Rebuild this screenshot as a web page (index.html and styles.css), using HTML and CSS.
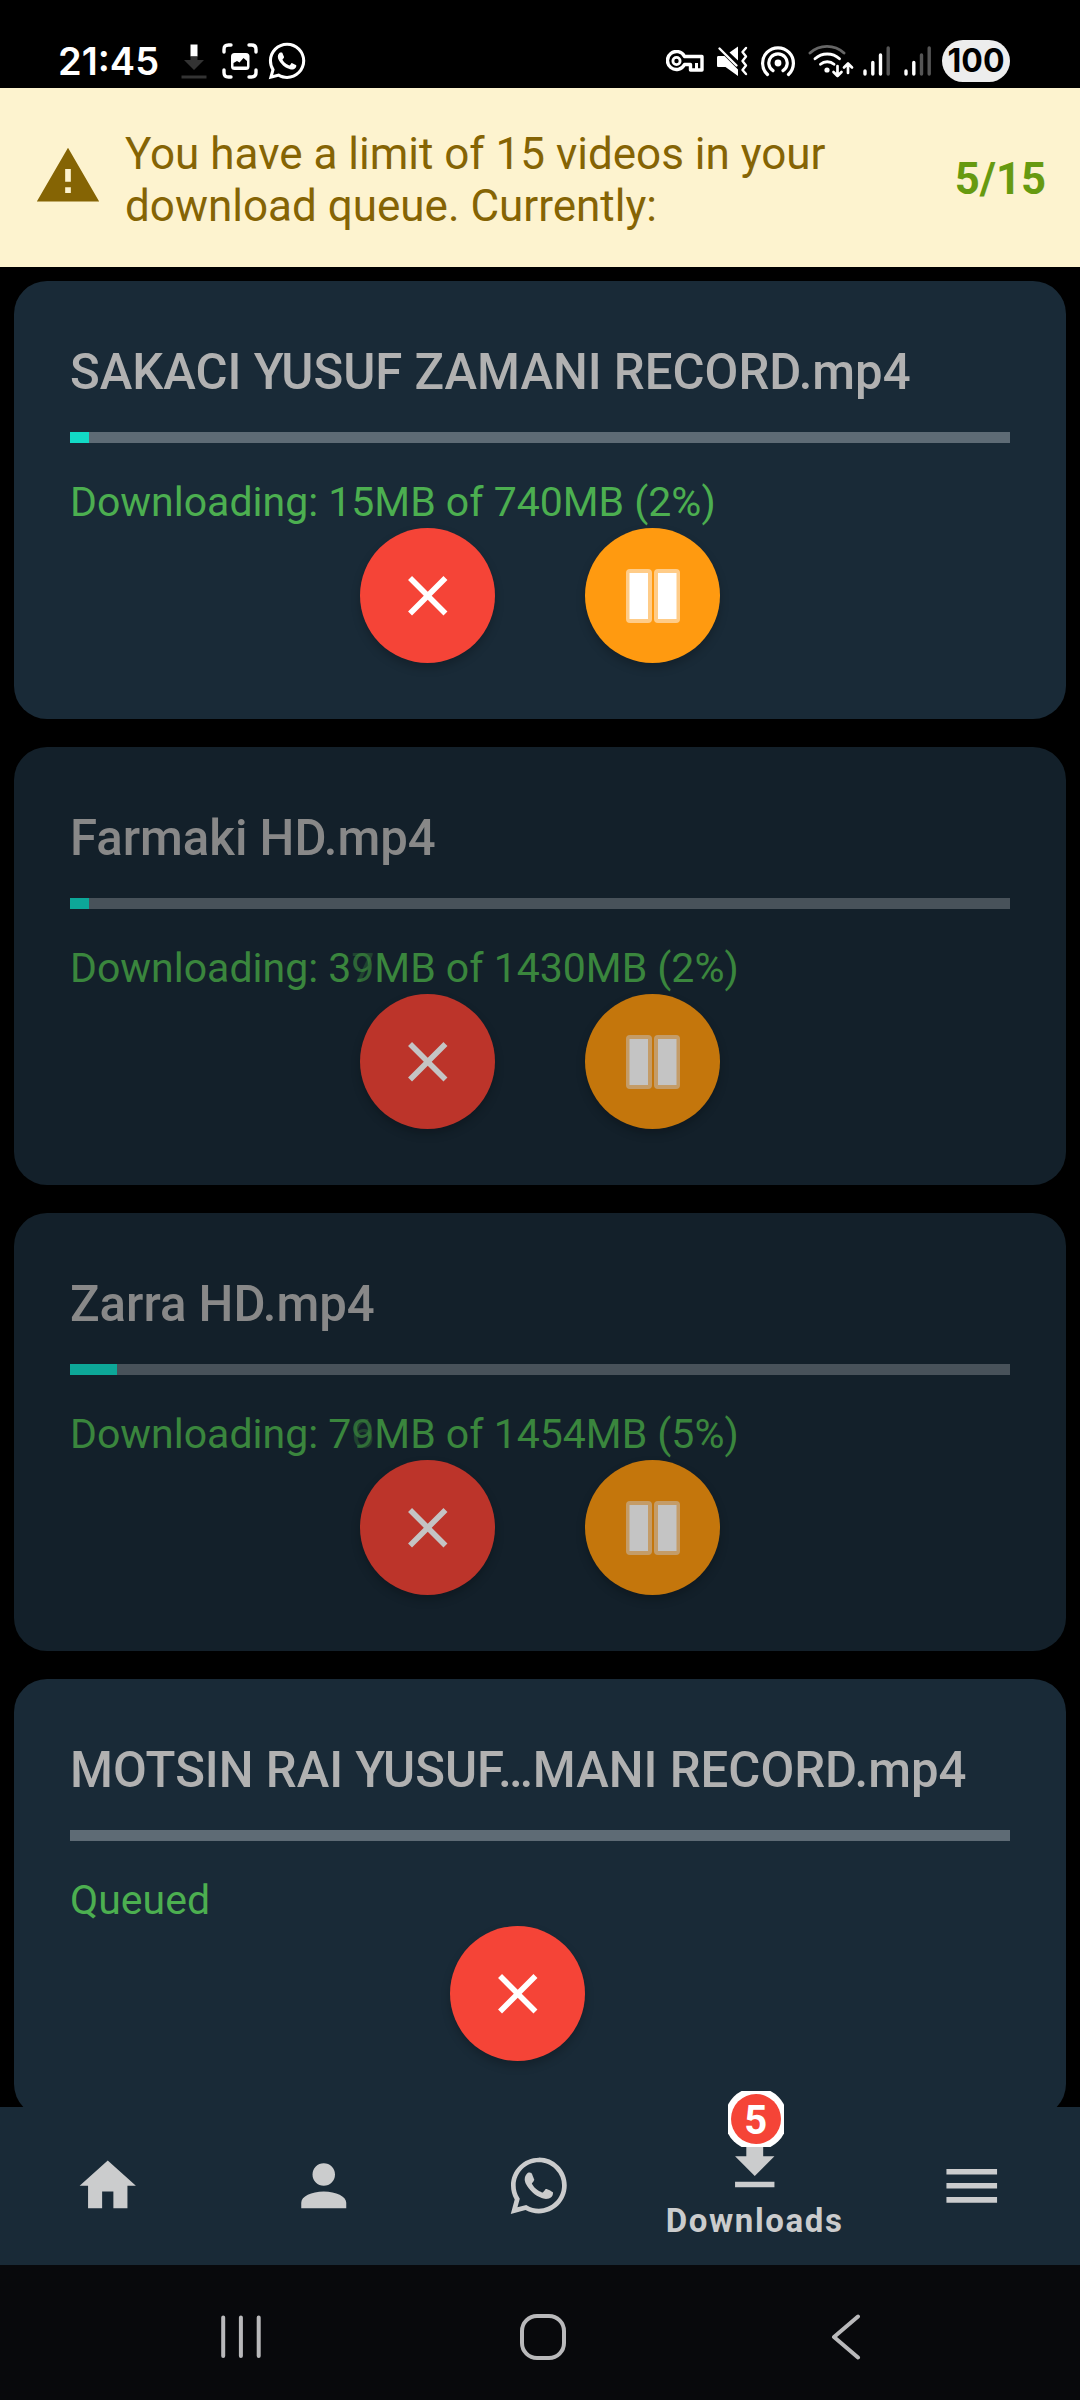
FILE: index.html
```
<!DOCTYPE html>
<html lang="en">
<head>
<meta charset="utf-8">
<title>Downloads</title>
<link rel="stylesheet" href="styles.css">
</head>
<body>
<svg class="defs" width="0" height="0">
  <symbol id="close" viewBox="0 0 24 24"><path d="M19 6.41 17.59 5 12 10.59 6.41 5 5 6.41 10.59 12 5 17.59 6.41 19 12 13.41 17.59 19 19 17.59 13.41 12z"/></symbol>
  <symbol id="pause" viewBox="0 0 54 54">
    <g opacity=".5"><rect width="26" height="54" rx="4"/><rect x="28" width="26" height="54" rx="4"/></g>
    <rect x="3.5" y="4" width="18.5" height="46"/><rect x="32" y="4" width="18.5" height="46"/>
  </symbol>
  <symbol id="whatsapp" viewBox="0 0 24 24"><path d="M12.04 2C6.58 2 2.13 6.45 2.13 11.91c0 1.75.46 3.45 1.32 4.95L2.05 22l5.25-1.38c1.45.79 3.08 1.21 4.74 1.21 5.46 0 9.91-4.45 9.91-9.91 0-2.65-1.03-5.14-2.9-7.01A9.82 9.82 0 0 0 12.04 2m.01 1.67c2.2 0 4.26.86 5.82 2.42a8.23 8.23 0 0 1 2.41 5.83c0 4.54-3.7 8.23-8.24 8.23-1.48 0-2.93-.39-4.19-1.15l-.3-.17-3.12.82.83-3.04-.2-.32a8.19 8.19 0 0 1-1.26-4.38c.01-4.54 3.7-8.24 8.25-8.24M8.53 7.33c-.16 0-.43.06-.66.31-.22.25-.87.86-.87 2.07 0 1.22.89 2.39 1 2.56.14.17 1.76 2.67 4.25 3.73.59.27 1.05.42 1.41.53.59.19 1.13.16 1.56.1.48-.07 1.46-.6 1.67-1.18s.21-1.07.15-1.18c-.07-.1-.23-.16-.48-.27-.25-.14-1.47-.74-1.69-.82-.23-.08-.37-.12-.56.12-.16.25-.64.81-.78.97-.15.17-.29.19-.53.07-.26-.13-1.06-.39-2-1.23-.74-.66-1.23-1.47-1.38-1.72-.12-.24-.01-.39.11-.5.11-.11.27-.29.37-.44.13-.14.17-.25.25-.41.08-.17.04-.31-.02-.43-.06-.11-.56-1.35-.77-1.84-.2-.48-.4-.42-.56-.43-.14 0-.3-.01-.47-.01"/></symbol>
</svg>

<header class="status-bar">
  <div class="status-left">
    <span class="clock">21:45</span>
    <svg class="s-download" width="26" height="36" viewBox="0 0 26 36"><path fill="#fff" d="M9.5 1.500h7v12h-7z"/><path fill="#333" d="M9.5 13.500h7v3.500H23L13 27 3 17h6.500zM.5 32.500h25v3H.5z"/></svg>
    <svg class="s-shot" width="36" height="36" viewBox="0 0 36 36"><path fill="none" stroke="#fff" stroke-width="3.400" stroke-linecap="round" d="M2 9V6.500Q2 2 6.500 2H9M27 2h2.500Q34 2 34 6.500V9M34 27v2.500Q34 34 29.500 34H27M9 34H6.500Q2 34 2 29.500V27"/><rect x="9" y="10" width="18.500" height="17" rx="3.500" fill="#fff"/><path fill="#000" d="M11.500 23.500v-3.500l3.500-2 2.500 1.500 4-4.500 3.500 3v5.500z"/></svg>
    <svg class="s-whatsapp" width="44" height="44" fill="#fff"><use href="#whatsapp"/></svg>
  </div>
  <div class="status-right">
    <svg class="s-key" width="38" height="22" viewBox="0 0 38 22"><path fill="none" stroke="#fff" stroke-width="3.400" stroke-linejoin="round" d="M18.500 6.500H36v13.500H24.500v-5.500h-6A9 9 0 1 1 18.500 6.500z"/><path fill="none" stroke="#fff" stroke-width="3" d="M30.500 13v7"/><circle cx="10.500" cy="11" r="3.600" fill="none" stroke="#fff" stroke-width="2.800"/></svg>
    <svg class="s-mute" width="31" height="31" viewBox="0 0 31 31"><path fill="#fff" d="M1 10h6.500L21 23.500V30L8.500 21H1Q0 21 0 19.500v-8Q0 10 1 10zM12.500 6.500 21 .5v14z"/><path fill="none" stroke="#fff" stroke-width="2.400" stroke-linecap="round" stroke-linejoin="round" d="m2.500 2.500 17 17M29 2l-3.500 4 3.500 4.500-3.500 4.500 3.500 4.500-3.500 4.500 3.500 4"/></svg>
    <svg class="s-hotspot" width="34" height="32" viewBox="0 0 34 32"><circle cx="17" cy="18" r="3.400" fill="#fff"/><path fill="none" stroke="#fff" stroke-width="3.200" stroke-linecap="round" d="M12 25.700a9.200 9.200 0 1 1 10 0M6.500 29.500a15.400 15.400 0 1 1 21 0"/></svg>
    <svg class="s-wifi" width="46" height="34" viewBox="0 0 46 34"><g fill="none" stroke="#fff" stroke-width="2.900" stroke-linecap="round"><path stroke="#666" d="M2 9a25 25 0 0 1 34 0"/><path d="M7 14.800a18 18 0 0 1 24.500 0M12.500 20.300a10 10 0 0 1 13.500 0"/><path stroke-width="2.700" stroke-linejoin="round" d="M29.500 22v10m-4-4 4 4 4-4M40 29V19.500m-4 4 4-4 4 4"/></g><circle cx="19" cy="26" r="2.600" fill="#fff"/></svg>
    <svg class="s-signal" width="27" height="30" viewBox="0 0 27 30" stroke-width="3.400" stroke-linecap="round"><path stroke="#fff" d="M2 25v3M9.800 16.500V28M17.500 9v19"/><path stroke="#555" d="M25.200 2v26"/></svg>
    <svg class="s-signal2" width="27" height="30" viewBox="0 0 27 30" stroke-width="3.400" stroke-linecap="round"><path stroke="#fff" d="M2 25v3M9.800 16.500V28"/><path stroke="#555" d="M17.500 9v19M25.200 2v26"/></svg>
    <span class="battery">100</span>
  </div>
</header>

<section class="banner">
  <svg class="banner-icon" viewBox="0 0 24 24"><path d="M13 14h-2V9.500h2M13 18h-2v-2h2M1 21h22L12 2z"/></svg>
  <p class="banner-text">You have a limit of 15 videos in your download queue. Currently:</p>
  <strong class="banner-count">5/15</strong>
</section>

<main class="list">
  <article class="card">
    <h2 class="title">SAKACI YUSUF ZAMANI RECORD.mp4</h2>
    <div class="track"><div class="fill" style="width:2%"></div></div>
    <p class="state">Downloading: 15MB of 740MB (2%)</p>
    <div class="actions">
      <button class="btn cancel"><svg class="x"><use href="#close"/></svg></button>
      <button class="btn hold"><svg class="bars"><use href="#pause"/></svg></button>
    </div>
  </article>
  <article class="card dim">
    <h2 class="title">Farmaki HD.mp4</h2>
    <div class="track"><div class="fill" style="width:2%"></div></div>
    <p class="state">Downloading: 3<span class="digit"><span class="current">9</span><span class="previous">7</span></span>MB of 1430MB (2%)</p>
    <div class="actions">
      <button class="btn cancel"><svg class="x"><use href="#close"/></svg></button>
      <button class="btn hold"><svg class="bars"><use href="#pause"/></svg></button>
    </div>
  </article>
  <article class="card dim">
    <h2 class="title">Zarra HD.mp4</h2>
    <div class="track"><div class="fill" style="width:5%"></div></div>
    <p class="state">Downloading: 7<span class="digit"><span class="current">9</span><span class="previous">6</span></span>MB of 1454MB (5%)</p>
    <div class="actions">
      <button class="btn cancel"><svg class="x"><use href="#close"/></svg></button>
      <button class="btn hold"><svg class="bars"><use href="#pause"/></svg></button>
    </div>
  </article>
  <article class="card">
    <h2 class="title">MOTSIN RAI YUSUF…MANI RECORD.mp4</h2>
    <div class="track"></div>
    <p class="state">Queued</p>
    <div class="actions">
      <button class="btn cancel"><svg class="x"><use href="#close"/></svg></button>
    </div>
  </article>
</main>

<nav class="tabs">
  <a class="tab"><svg class="tab-icon" viewBox="0 0 24 24"><path d="M10 20v-6h4v6h5v-8h3L12 3 2 12h3v8z"/></svg></a>
  <a class="tab"><svg class="tab-icon" viewBox="0 0 24 24"><path d="M12 4a4 4 0 1 1 0 8 4 4 0 0 1 0-8m0 10c4.420 0 8 1.790 8 4v2H4v-2c0-2.210 3.580-4 8-4"/></svg></a>
  <a class="tab"><svg class="tab-icon"><use href="#whatsapp"/></svg></a>
  <a class="tab active">
    <svg class="tab-icon" viewBox="0 0 24 24"><path d="M5 20h14v-2H5M19 9h-4V3H9v6H5l7 7z"/></svg>
    <span class="badge"><span class="badge-dot">5</span></span>
    <span class="tab-label">Downloads</span>
  </a>
  <a class="tab"><svg class="tab-icon" viewBox="0 0 24 24"><path d="M3 6h18v2H3zm0 5h18v2H3zm0 5h18v2H3z"/></svg></a>
</nav>

<footer class="system-nav">
  <svg width="40" height="44" viewBox="0 0 40 44"><path d="M2.200 2.500v38.500M19.900 2.500v38.500M37.700 2.500v38.500"/></svg>
  <svg class="home-key" width="46" height="46" viewBox="0 0 46 46"><rect x="2" y="2" width="42" height="42" rx="15"/></svg>
  <svg width="30" height="46" viewBox="0 0 30 46"><path d="M27 2.500 3 23l24 20.500"/></svg>
</footer>
</body>
</html>
```
FILE: styles.css
```
* { box-sizing: border-box; margin: 0; padding: 0; }

body {
  width: 1080px;
  height: 2400px;
  overflow: hidden;
  display: flex;
  flex-direction: column;
  background: #000;
  font-family: Roboto, "Liberation Sans", sans-serif;
}

svg { display: block; flex: none; }
.defs { position: absolute; }

/* Status bar */
.status-bar {
  flex: none;
  height: 88px;
  padding: 34px 70px 0 58px;
  display: flex;
  justify-content: space-between;
  color: #fff;
  font-family: Inter, "Liberation Sans", sans-serif;
}
.status-left, .status-right { display: flex; align-items: center; height: 54px; }
.clock { width: 101px; font-size: 38px; font-weight: 600; line-height: 50px; }
.s-download { margin-left: 22px; }
.s-shot { margin-left: 15px; }
.s-whatsapp { margin-left: 7px; }
.s-mute { margin-left: 13px; }
.s-hotspot { margin-left: 13px; }
.s-wifi { margin-left: 13px; }
.s-signal { margin-left: 9px; }
.s-signal2 { margin-left: 14px; }
.battery {
  width: 68px;
  height: 42px;
  margin-left: 11px;
  border-radius: 21px;
  background: #ededed;
  color: #000;
  font-size: 32px;
  font-weight: 700;
  line-height: 41px;
  text-align: center;
}

/* Queue limit banner */
.banner {
  flex: none;
  height: 179px;
  padding: 0 34px;
  display: flex;
  align-items: center;
  background: #fdf3cf;
  color: #856404;
}
.banner-icon { width: 68px; height: 68px; margin-bottom: 3px; fill: #856404; }
.banner-text {
  flex: 1;
  margin-left: 23px;
  padding: 5px 90px 0 0;
  font-size: 44px;
  line-height: 52px;
}
.banner-count { padding-top: 4px; font-size: 43.6px; line-height: 52px; color: #669a10; }

/* Download cards */
.list {
  flex: 1;
  min-height: 0;
  overflow: hidden;
  padding: 14px 14px 0;
  display: flex;
  flex-direction: column;
  gap: 28px;
}
.card {
  flex: none;
  height: 438px;
  padding: 62px 56px 0;
  border-radius: 33px;
  background: #192a37;
}
.dim { opacity: .77; }
.title {
  font-size: 49.1px;
  font-weight: 500;
  line-height: 58px;
  white-space: nowrap;
  color: #b1b1b1;
}
.track { height: 11px; margin-top: 31px; background: #5e6b75; }
.fill { height: 100%; background: #12dac6; }
.state { margin-top: 34px; font-size: 41px; line-height: 50px; color: #4caf50; }
.digit { position: relative; }
.current { opacity: .7; }
.previous { position: absolute; left: 0; top: 0; line-height: normal; opacity: .35; }
.actions { display: flex; justify-content: center; margin-top: 1px; }
.btn {
  width: 135px;
  height: 135px;
  border: 0;
  border-radius: 50%;
  display: flex;
  align-items: center;
  justify-content: center;
  box-shadow: 0 5px 10px rgba(0, 0, 0, .22);
}
.cancel { margin-right: 45px; background: #f54437; }
.hold { margin-left: 45px; background: #ff9a10; }
.x { width: 67.5px; height: 67.5px; fill: #fff; }
.bars { width: 54px; height: 54px; fill: #fff; }

/* Bottom tabs */
.tabs { flex: none; height: 158px; display: flex; background: #192a37; }
.tab {
  flex: 1;
  position: relative;
  display: flex;
  flex-direction: column;
  align-items: center;
  justify-content: center;
  color: #cbcccd;
}
.active { padding-right: 2px; }
.tab-icon { width: 67.5px; height: 67.5px; fill: #cbcccd; }
.tab-label { margin-top: 3px; font-size: 33px; font-weight: 700; line-height: 40px; letter-spacing: 1.6px; }
.badge {
  position: absolute;
  left: 81px;
  top: -16px;
  width: 56px;
  height: 56px;
  overflow: hidden;
  display: flex;
  align-items: center;
  justify-content: center;
}
.badge-dot {
  width: 50px;
  height: 50px;
  border-radius: 50%;
  background: #f54437;
  box-shadow: 0 0 0 6.500px #fff;
  color: #fff;
  font-size: 40px;
  font-weight: 700;
  line-height: 53px;
  text-align: center;
}

/* System navigation */
.system-nav {
  flex: none;
  height: 135px;
  padding: 8px 219px 0 221px;
  display: flex;
  align-items: center;
  justify-content: space-between;
  background: #08090c;
}
.system-nav svg { fill: none; stroke: #b9b9bb; stroke-width: 4; stroke-linecap: round; stroke-linejoin: round; }
.home-key { margin-right: 6px; }
```
